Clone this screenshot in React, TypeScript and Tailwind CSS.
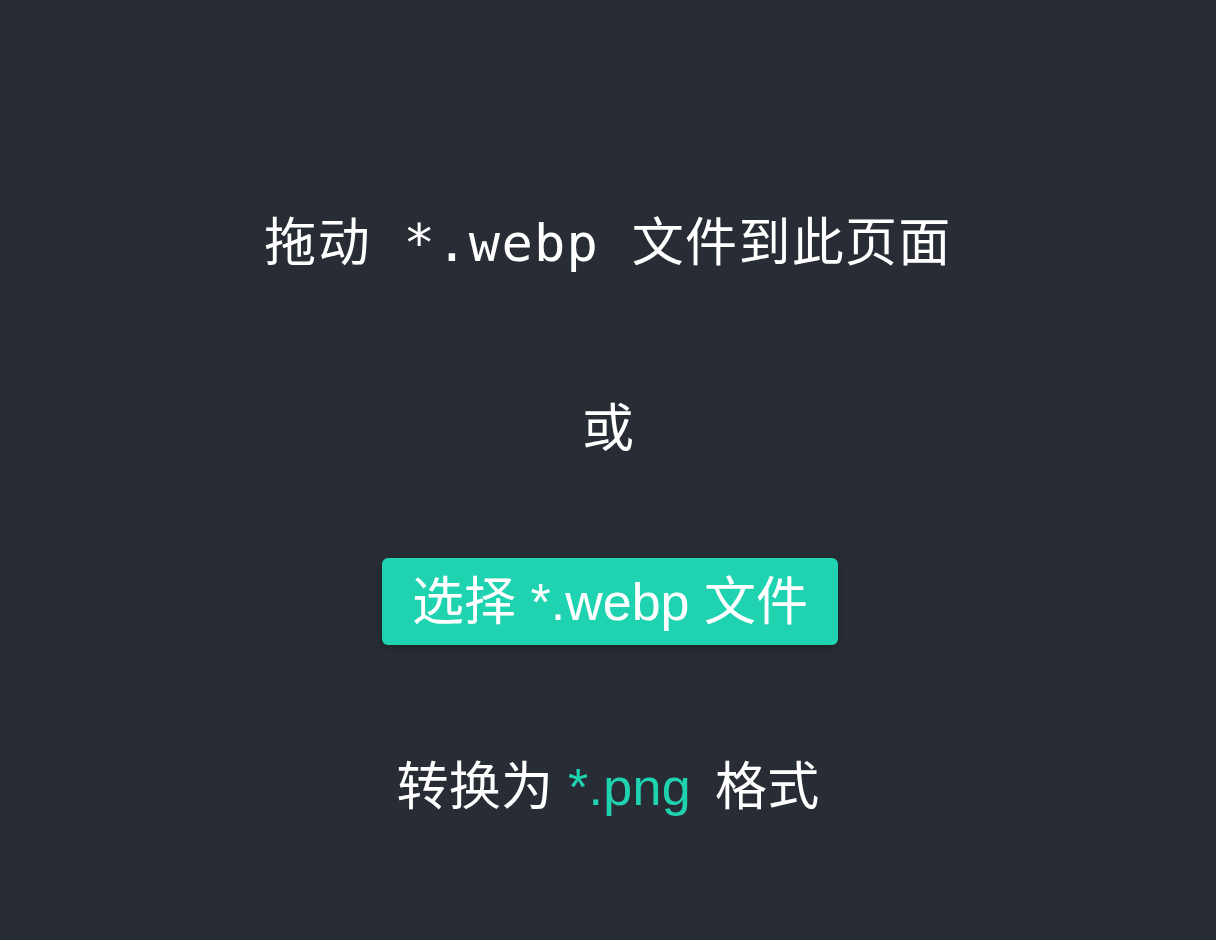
export default function App() {
  return (
    <div className="w-[1216px] h-[940px] bg-[#282c34] text-white flex flex-col items-center pt-[217px]">
      <div className="text-[52px] leading-[52px] h-[52px] whitespace-pre tracking-[1.3px] font-['DejaVu_Sans_Mono','Noto_Sans_CJK_SC',monospace]">
        {"拖动 *.webp 文件到此页面"}
      </div>
      <div className="mt-[130px] text-[52px] leading-[52px] h-[52px] font-['Noto_Sans_CJK_SC',sans-serif]">
        或
      </div>
      <button className="mt-[107px] ml-[4px] h-[87px] px-[30px] rounded-[6px] bg-[#20d3b0] text-white text-[52px] leading-[52px] flex items-center shadow-[0_2px_8px_rgba(0,0,0,0.25)] whitespace-pre font-['Liberation_Sans','Noto_Sans_CJK_SC',sans-serif]">
        {"选择 *.webp 文件"}
      </button>
      <div className="mt-[116px] text-[52px] leading-[52px] h-[52px] whitespace-pre tracking-[0.3px] font-['Liberation_Sans','Noto_Sans_CJK_SC',sans-serif]">
        {"转换为 "}
        <span className="text-[#20d3b0] mr-[24px]">*.png</span>
        {"格式"}
      </div>
    </div>
  );
}
